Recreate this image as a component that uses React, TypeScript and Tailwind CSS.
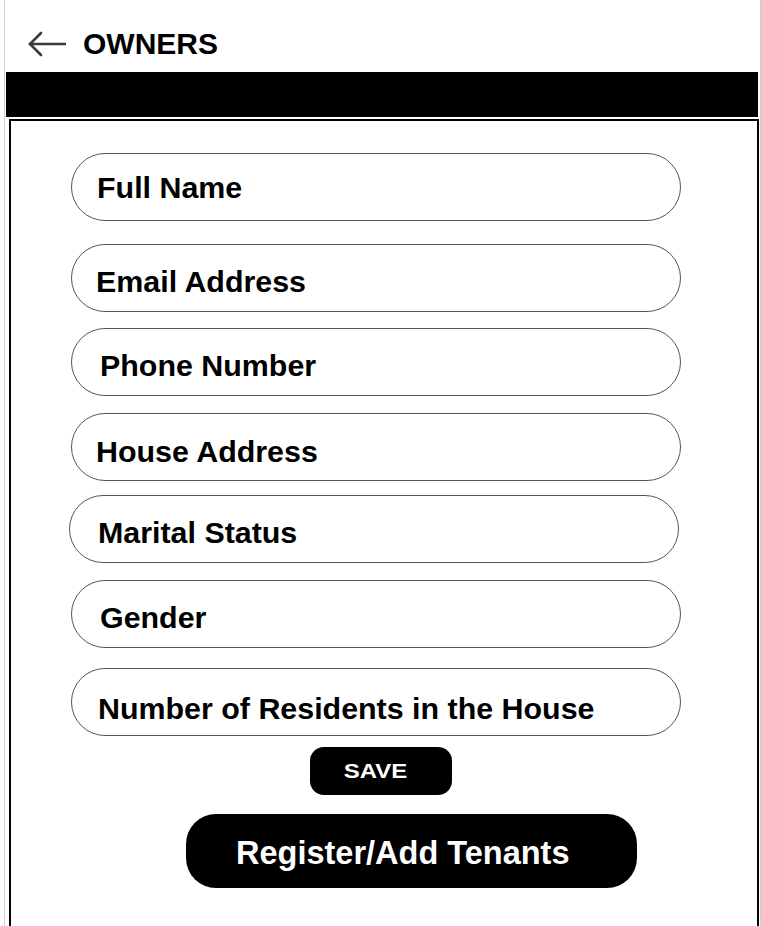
const fields = [
  { label: "Full Name", cls: "mt-0 ml-[60px] pl-[25px] pt-0" },
  { label: "Email Address", cls: "mt-[23px] ml-[60px] pl-[24px] pt-[6px]" },
  { label: "Phone Number", cls: "mt-[16px] ml-[60px] pl-[28px] pt-[6px]" },
  { label: "House Address", cls: "mt-[17px] ml-[60px] pl-[24px] pt-[8px]" },
  { label: "Marital Status", cls: "mt-[14px] ml-[58px] pl-[28px] pt-[6px]" },
  { label: "Gender", cls: "mt-[17px] ml-[60px] pl-[28px] pt-[6px]" },
  { label: "Number of Residents in the House", cls: "mt-[20px] ml-[60px] pl-[26px] pt-[12px]" },
];

function BackArrow() {
  return (
    <svg width="38" height="26" viewBox="0 0 38 26" fill="none" stroke="#3a3a3a" strokeWidth="2.6" strokeLinecap="round">
      <path d="M2 13 H37" />
      <path d="M13 2 L2 13 L13 24" />
    </svg>
  );
}

export default function App() {
  return (
    <div className="h-[926px] overflow-hidden bg-white font-['Liberation_Sans',Arial,sans-serif] text-black">
      <div className="ml-[4px] w-[757px] min-h-[926px] border-x border-[#cfcfcf]">
        <div className="flex h-[72px] items-center pl-[23px] pt-[15px]">
          <BackArrow />
          <h1 className="ml-[17px] text-[30px] font-bold leading-none">OWNERS</h1>
        </div>
        <div className="ml-px mr-[2px] h-[45px] bg-black" />
        <div className="ml-[4px] mr-px mt-[2px] flex h-[830px] flex-col border-2 border-black pt-[32px]">
          {fields.map((f) => (
            <div
              key={f.label}
              className={`flex h-[68px] w-[610px] items-center rounded-full border border-[#555] text-[30.4px] font-bold leading-none ${f.cls}`}
            >
              {f.label}
            </div>
          ))}
          <button className="ml-[299px] mt-[11px] flex h-[48px] w-[142px] items-center justify-center rounded-[14px] bg-black pr-[11px] text-[20px] font-bold text-white">
            <span className="inline-block scale-x-[1.2]">SAVE</span>
          </button>
          <button className="ml-[175px] mt-[19px] flex h-[74px] w-[451px] items-center rounded-[30px] bg-black pl-[50px] pt-[4px] text-[32.5px] font-bold text-white">
            Register/Add Tenants
          </button>
        </div>
      </div>
    </div>
  );
}
